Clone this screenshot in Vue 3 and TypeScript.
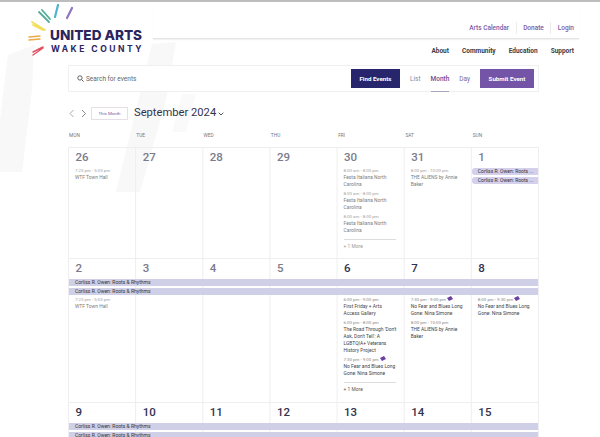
<template>
  <div class="page">
    <svg class="brush" width="600" height="437" viewBox="0 0 600 437" aria-hidden="true">
      <path d="M8 55 L34 45 L32 90 L22 172 L0 172 L0 120 Z" fill="#f8f8f8" />
      <path d="M152 44 L176 42 L166 100 L140 192 L116 192 L136 110 Z" fill="#f8f8f8" />
      <path d="M182 94 L196 94 L186 132 L172 132 Z" fill="#fafafa" />
    </svg>

    <header class="header">
      <svg class="logo" width="120" height="54" viewBox="28 4 120 54">
        <g fill="none" stroke-linecap="round">
          <path d="M67 18 L72 8" stroke="#8f76bd" stroke-width="2.2" />
          <path d="M55 17 L58 5" stroke="#4fb3cf" stroke-width="2.2" />
          <path d="M39 12 L49 22 M42 10 L50 19" stroke="#55ab98" stroke-width="1.8" />
          <path d="M32 22 L45 30 M33 25 L43 30" stroke="#f1de5a" stroke-width="1.8" />
          <path d="M29 37 L40 36 M29 40 L40 39" stroke="#eeaa45" stroke-width="1.4" />
          <path d="M33 55 L43 48 M33 52 L43 47" stroke="#e0505f" stroke-width="1.4" />
        </g>
        <text x="50" y="40" class="logo-top">UNITED ARTS</text>
        <text x="51" y="52" class="logo-bottom">WAKE COUNTY</text>
      </svg>
      <div class="nav-area">
        <nav class="nav-top">
          <a v-for="link in topLinks" :key="link">{{ link }}</a>
        </nav>
        <nav class="nav-main">
          <a v-for="link in mainLinks" :key="link">{{ link }}</a>
        </nav>
      </div>
    </header>

    <main class="main">
      <div class="search-bar">
        <svg class="search-icon" width="7" height="7" viewBox="0 0 10 10">
          <circle cx="4.2" cy="4.2" r="3.1" fill="none" stroke="#555" stroke-width="1.3" />
          <path d="M6.6 6.6 L9.4 9.4" stroke="#555" stroke-width="1.4" />
        </svg>
        <span class="search-text">Search for events</span>
        <button class="btn btn-find">Find Events</button>
        <div class="views">
          <a>List</a>
          <a class="active">Month</a>
          <a class="day">Day</a>
        </div>
        <button class="btn btn-submit">Submit Event</button>
      </div>

      <div class="toolbar">
        <svg width="20" height="9" viewBox="0 0 20 9" class="arrows">
          <path d="M4.5 1 L1 4.5 L4.5 8" fill="none" stroke="#aaa" stroke-width="1" />
          <path d="M13 1 L16.5 4.5 L13 8" fill="none" stroke="#888" stroke-width="1" />
        </svg>
        <button class="this-month">This Month</button>
        <span class="month-title">September 2024</span>
        <svg width="6" height="4" viewBox="0 0 6 4" class="caret">
          <path d="M0.7 0.7 L3 3 L5.3 0.7" fill="none" stroke="#444" stroke-width="0.9" />
        </svg>
      </div>

      <div class="dow">
        <span v-for="d in dayNames" :key="d">{{ d }}</span>
      </div>

      <div class="calendar">
        <section
          v-for="(week, w) in weeks"
          :key="w"
          class="week"
          :style="{ height: week.height + 'px' }"
        >
          <div class="row nums">
            <span v-for="day in week.days" :key="day.num" class="num" :class="day.tone">{{ day.num }}</span>
          </div>
          <div v-if="week.bars" class="bars">
            <div v-for="n in week.bars" :key="n" class="bar">Corliss R. Owen: Roots &amp; Rhythms</div>
          </div>
          <div class="row">
            <div v-for="day in week.days" :key="day.num" class="cell" :class="day.tone">
              <div v-for="chip in day.chips || 0" :key="chip" class="chip">Corliss R. Owen: Roots ...</div>
              <div v-for="(ev, i) in day.events || []" :key="i" class="event">
                <div class="time">
                  {{ ev.time }}
                  <svg v-if="ev.flag" width="6" height="5" viewBox="0 0 6 5" class="flag">
                    <path d="M0 2 L4 0 L6 3 L2 5 Z" fill="#6b3fa0" />
                  </svg>
                </div>
                <div class="title">{{ ev.title }}</div>
              </div>
              <div v-if="day.more" class="more">+ 1 More</div>
            </div>
          </div>
        </section>
      </div>
    </main>
  </div>
</template>

<script setup lang="ts">
interface CalEvent {
  time: string
  title: string
  flag?: boolean
}

interface Day {
  num: number
  tone: string
  chips?: number
  events?: CalEvent[]
  more?: boolean
}

interface Week {
  height: number
  bars?: number
  days: Day[]
}

const topLinks = ['Arts Calendar', 'Donate', 'Login']
const mainLinks = ['About', 'Community', 'Education', 'Support']
const dayNames = ['MON', 'TUE', 'WED', 'THU', 'FRI', 'SAT', 'SUN']

const festa: CalEvent = { time: '8:00 am - 8:00 pm', title: 'Festa Italiana North Carolina' }
const wtf: CalEvent = { time: '7:23 pm - 5:03 pm', title: 'WTF Town Hall' }
const aliens: CalEvent = { time: '8:00 pm - 10:00 pm', title: 'THE ALIENS by Annie Baker' }
const noFear: CalEvent = {
  time: '7:30 pm - 9:00 pm',
  title: 'No Fear and Blues Long Gone: Nina Simone',
  flag: true,
}

const weeks: Week[] = [
  {
    height: 111,
    days: [
      { num: 26, tone: 'past', events: [wtf] },
      { num: 27, tone: 'past' },
      { num: 28, tone: 'past' },
      { num: 29, tone: 'past' },
      { num: 30, tone: 'past', events: [festa, festa, festa], more: true },
      { num: 31, tone: 'past', events: [aliens] },
      { num: 1, tone: 'past', chips: 2 },
    ],
  },
  {
    height: 144,
    bars: 2,
    days: [
      { num: 2, tone: 'past', events: [wtf] },
      { num: 3, tone: 'past' },
      { num: 4, tone: 'past' },
      { num: 5, tone: 'past' },
      {
        num: 6,
        tone: 'now',
        events: [
          { time: '6:00 pm - 9:00 pm', title: 'First Friday + Arts Access\u00a0Gallery' },
          { time: '6:00 pm - 8:00 pm', title: "The Road Through 'Don't Ask, Don't Tell': A LGBTQIA+ Veterans History Project" },
          noFear,
        ],
        more: true,
      },
      { num: 7, tone: 'now', events: [noFear, aliens] },
      { num: 8, tone: 'now', events: [{ ...noFear, time: '8:00 pm - 9:30 pm' }] },
    ],
  },
  {
    height: 60,
    bars: 2,
    days: [9, 10, 11, 12, 13, 14, 15].map((num) => ({ num, tone: 'now' })),
  },
]
</script>

<style>
html,
body {
  height: 437px;
  overflow: hidden;
  background: #fff;
}
</style>

<style scoped>
.page {
  position: relative;
  width: 600px;
  height: 437px;
  overflow: hidden;
  border-top: 2px solid #bdbdbd;
  box-sizing: border-box;
  font-family: Roboto, "Liberation Sans", sans-serif;
  color: #444;
}

.brush {
  position: absolute;
  top: -2px;
  left: 0;
}

.header {
  position: relative;
  display: flex;
  justify-content: space-between;
  height: 61px;
  padding: 2px 21px 0 28px;
}

.logo-top {
  font-family: Inter, sans-serif;
  font-size: 13.6px;
  font-weight: 800;
  fill: #2b2560;
}

.logo-bottom {
  font-family: Inter, sans-serif;
  font-size: 8.5px;
  font-weight: 700;
  letter-spacing: 2.5px;
  fill: #2b2560;
}

.nav-area {
  width: 426px;
}

.nav-top {
  display: flex;
  justify-content: flex-end;
  align-items: center;
  height: 35px;
  padding-top: 14px;
  box-sizing: border-box;
  border-bottom: 1px solid #e4e4e4;
  box-shadow: 0 1px 1px #f2f2f2;
  font-size: 6.5px;
  font-weight: 500;
  color: #7a5ba5;
}

.nav-top a {
  padding: 2px 6.5px;
  border-left: 1px solid #ececec;
}

.nav-top a:first-child {
  border-left: 0;
}

.nav-top a:last-child {
  padding-right: 5px;
}

.nav-main {
  display: flex;
  justify-content: flex-end;
  gap: 13px;
  padding: 8px 5px 0 0;
  font-size: 6.5px;
  font-weight: 700;
  line-height: 9px;
  color: #3c3c48;
}

.main {
  position: relative;
  width: 471px;
  margin-left: 68px;
}

.search-bar {
  display: flex;
  align-items: center;
  height: 27px;
  box-sizing: border-box;
  padding: 0 4px 0 8px;
  background: #fff;
  border: 1px solid #f0f0f0;
}

.search-text {
  flex: 1;
  margin-left: 2px;
  font-size: 6.5px;
  color: #666;
}

.btn {
  height: 19px;
  padding: 0;
  border: 0;
  color: #fff;
  font-family: inherit;
  font-size: 6.2px;
  font-weight: 700;
}

.btn-find {
  width: 49px;
  background: #27256b;
}

.btn-submit {
  width: 54px;
  background: #7354a6;
}

.views {
  display: flex;
  align-self: stretch;
  width: 80px;
  gap: 10px;
  padding-left: 10px;
  box-sizing: border-box;
  align-items: center;
  font-size: 6.5px;
  color: #8a8a9a;
}

.views .active {
  position: relative;
  display: flex;
  align-items: center;
  align-self: stretch;
  color: #6a4d9c;
  font-weight: 500;
}

.views .active::after {
  content: "";
  position: absolute;
  left: 0;
  right: 0;
  bottom: -1px;
  height: 1.5px;
  background: #a9a3bd;
}

.views .day {
  color: #7a6aa0;
}

.toolbar {
  display: flex;
  align-items: center;
  height: 14px;
  margin-top: 14px;
  padding-left: 1px;
}

.arrows {
  margin-right: 2px;
}

.this-month {
  width: 37px;
  height: 13px;
  padding: 0;
  background: #fff;
  border: 1px solid #e6dfe6;
  font-family: inherit;
  font-size: 4.4px;
  color: #7a5ba5;
}

.month-title {
  margin-left: 6px;
  font-size: 11.2px;
  line-height: 14px;
  color: #33334f;
}

.caret {
  margin: 2px 0 0 2px;
}

.dow {
  display: grid;
  grid-template-columns: repeat(7, 1fr);
  height: 27px;
  padding-top: 13px;
  box-sizing: border-box;
  font-size: 4.8px;
  line-height: 6px;
  color: #777;
}

.dow span {
  padding-left: 1px;
}

.calendar {
  border-right: 1px solid #eeeef1;
}

.week {
  box-sizing: border-box;
  border-top: 1px solid #eeeef1;
  background-image: linear-gradient(90deg, #eeeef1 1px, transparent 1px);
  background-size: calc(100% / 7) 100%;
}

.row {
  display: grid;
  grid-template-columns: repeat(7, 1fr);
}

.nums {
  height: 20px;
}

.num {
  padding: 3px 0 0 7.5px;
  font-size: 11.5px;
  font-weight: 500;
  line-height: 13px;
}

.num.past {
  color: #7b7b8c;
}

.num.now {
  color: #33334f;
}

.bars {
  padding-left: 1px;
}

.bar {
  height: 7px;
  margin-bottom: 2px;
  padding-left: 6px;
  background: #cfcfe8;
  font-size: 5px;
  line-height: 7px;
  color: #333;
}

.cell {
  min-width: 0;
  padding: 0 4px 0 7px;
}

.chip {
  height: 7px;
  margin: 0 -4px 2px -6px;
  padding-left: 6px;
  background: #d4d0ec;
  border-radius: 3px 0 0 3px;
  font-size: 5px;
  line-height: 7px;
  color: #333;
  white-space: nowrap;
  overflow: hidden;
}

.event {
  margin-bottom: 2px;
  line-height: 7px;
  font-size: 4.9px;
  color: #444;
}

.event:first-child {
  margin-top: -1px;
}

.cell.past .event {
  color: #7c7c7c;
}

.time {
  font-size: 4.4px;
  color: #8a8a8a;
}

.cell.past .time {
  color: #a2a2a2;
}

.flag {
  vertical-align: 0;
}

.more {
  margin: 5px 4px 0 0;
  padding-top: 3px;
  border-top: 1px solid #ddd;
  font-size: 4.9px;
  line-height: 7px;
  color: #555;
}

.cell.past .more {
  color: #999;
}
</style>
